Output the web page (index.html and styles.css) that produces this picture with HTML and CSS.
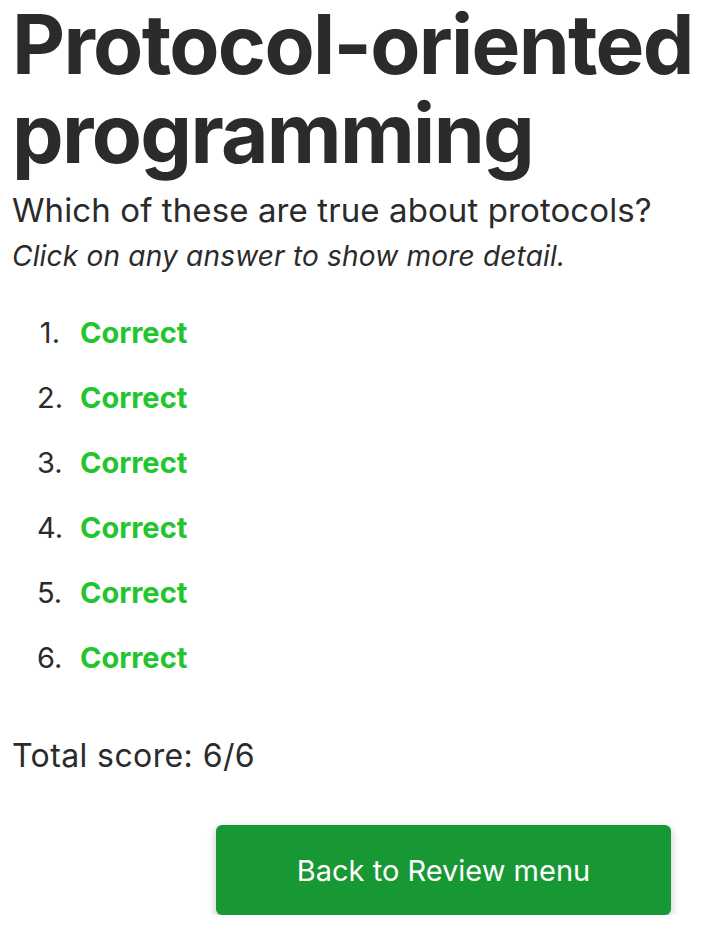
FILE: index.html
```html
<!DOCTYPE html>
<html lang="en">
<head>
<meta charset="utf-8">
<title>Protocol-oriented programming</title>
<link rel="stylesheet" href="styles.css">
</head>
<body>
<main class="page">
  <h1 class="title">Protocol-oriented programming</h1>
  <p class="question">Which of these are true about protocols?</p>
  <p class="hint">Click on any answer to show more detail.</p>
  <ol class="answers">
    <li class="answer"><span class="correct">Correct</span></li>
    <li class="answer"><span class="correct">Correct</span></li>
    <li class="answer"><span class="correct">Correct</span></li>
    <li class="answer"><span class="correct">Correct</span></li>
    <li class="answer"><span class="correct">Correct</span></li>
    <li class="answer"><span class="correct">Correct</span></li>
  </ol>
  <p class="score">Total score: 6/6</p>
  <div class="actions">
    <button class="back-button" type="button">Back to Review menu</button>
  </div>
</main>
</body>
</html>
```
FILE: styles.css
```css
html, body {
  margin: 0;
  padding: 0;
  background: #ffffff;
}
body {
  font-family: Inter, "Noto Sans", sans-serif;
  color: #2b2b2b;
}
.page {
  padding: 0 12px;
}
.title {
  margin: 0 -12px 0 0;
  font-size: 82px;
  font-weight: 700;
  line-height: 89px;
  letter-spacing: -1.7px;
}
.question {
  margin: 10px 0 0 0;
  font-size: 33px;
  line-height: 44px;
  letter-spacing: 0.1px;
}
.hint {
  margin: 4px 0 0 0;
  font-size: 28px;
  font-style: italic;
  line-height: 40px;
  letter-spacing: 0.2px;
}
.answers {
  list-style: none;
  counter-reset: answer;
  margin: 24px 0 0 0;
  padding: 0 0 0 25px;
  font-size: 29px;
  line-height: 65px;
}
.answer {
  counter-increment: answer;
  display: flex;
}
.answer::before {
  content: counter(answer) ".";
  width: 23px;
  margin-right: 20px;
  text-align: right;
  color: #2b2b2b;
}
.correct {
  color: #22c52e;
  font-weight: 700;
}
.score {
  margin: 44px 0 0 0;
  font-size: 32px;
  line-height: 44px;
  letter-spacing: 0.4px;
}
.actions {
  display: flex;
  justify-content: flex-end;
  padding-right: 29px;
  margin-top: 47px;
}
.back-button {
  width: 455px;
  height: 90px;
  padding: 0;
  border: none;
  border-radius: 6px;
  background: #189834;
  color: #ffffff;
  font-family: Inter, "Noto Sans", sans-serif;
  font-size: 29px;
  box-shadow: 0 3px 8px rgba(0, 0, 0, 0.25);
}
```
